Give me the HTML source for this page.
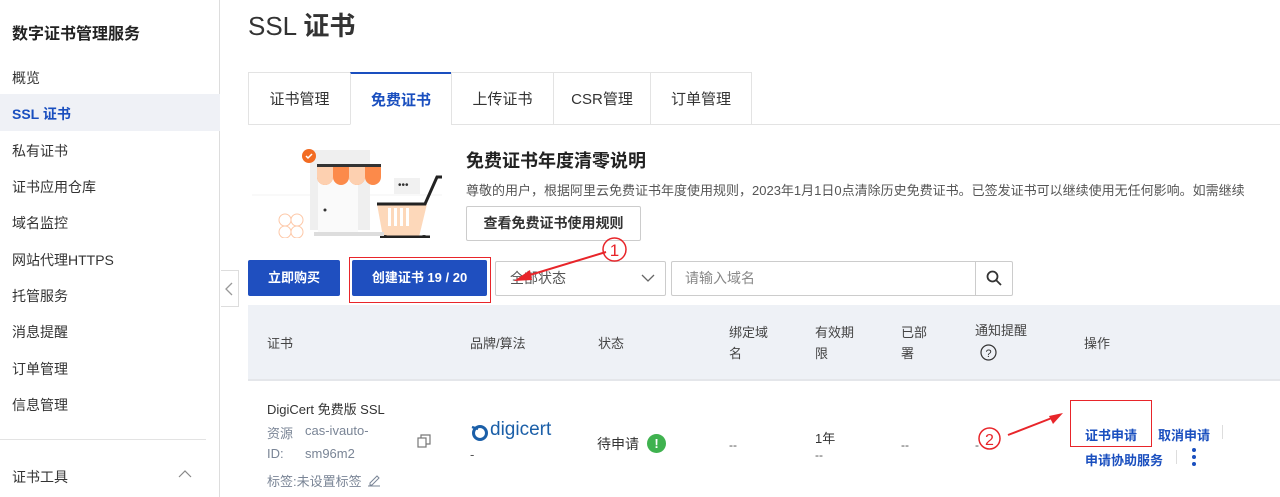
<!DOCTYPE html>
<html><head><meta charset="utf-8"><style>
*{margin:0;padding:0;box-sizing:border-box}
body{width:1280px;height:497px;overflow:hidden;background:#fff;font-family:"Liberation Sans","Noto Sans CJK SC",sans-serif;color:#333;position:relative}
.a{position:absolute;white-space:nowrap}
.nav{left:12px;font-size:14px;color:#333}
.blue{color:#1a4fbf}
.th{font-size:13px;color:#444;line-height:21px}
.btn{position:absolute;background:#1f4fbf;color:#fff;font-size:13px;font-weight:bold;text-align:center;line-height:36px;border-radius:2px}
.tab{position:absolute;top:72px;height:53px;border:1px solid #e3e3e3;font-size:15px;color:#333;text-align:center;line-height:53px;background:#fff}
</style></head><body>
<div class="a" style="left:0;top:0;width:220px;height:497px;border-right:1px solid #ddd"></div>
<div class="a" style="left:12px;top:20px;font-size:16px;font-weight:bold;color:#222">数字证书管理服务</div>
<div class="a" style="left:0;top:94px;width:220px;height:37px;background:#eff1f6"></div>
<div class="a nav" style="top:68px">概览</div>
<div class="a nav blue" style="top:104px;font-weight:bold">SSL 证书</div>
<div class="a nav" style="top:141px">私有证书</div>
<div class="a nav" style="top:177px">证书应用仓库</div>
<div class="a nav" style="top:213px">域名监控</div>
<div class="a nav" style="top:250px">网站代理HTTPS</div>
<div class="a nav" style="top:286px">托管服务</div>
<div class="a nav" style="top:322px">消息提醒</div>
<div class="a nav" style="top:359px">订单管理</div>
<div class="a nav" style="top:395px">信息管理</div>
<div class="a" style="left:0;top:439px;width:206px;height:1px;background:#e3e3e3"></div>
<div class="a nav" style="top:467px">证书工具</div>
<svg class="a" style="left:178px;top:470px" width="14" height="8"><path d="M1 7L7 1L13 7" stroke="#888" fill="none" stroke-width="1.2"/></svg>
<div class="a" style="left:221px;top:270px;width:18px;height:37px;border:1px solid #ddd;border-left:none;background:#fff"></div>
<svg class="a" style="left:225px;top:282px" width="8" height="14"><path d="M7 1L1 7L7 13" stroke="#999" fill="none" stroke-width="1.3"/></svg>
<div class="a" style="left:248px;top:6px;font-size:26px;color:#333"><span>SSL</span> <b>证书</b></div>
<div class="a" style="left:248px;top:124px;width:1032px;height:1px;background:#e3e3e3"></div>
<div class="tab" style="left:248px;width:103px">证书管理</div>
<div class="tab" style="left:350px;width:102px;border-top:2px solid #1a4fbf;border-bottom-color:#fff;color:#1a4fbf;font-weight:bold">免费证书</div>
<div class="tab" style="left:451px;width:103px">上传证书</div>
<div class="tab" style="left:553px;width:98px">CSR管理</div>
<div class="tab" style="left:650px;width:102px">订单管理</div>
<svg class="a" style="left:252px;top:140px" width="190" height="98">
<line x1="0" y1="55" x2="190" y2="55" stroke="#f3f3f3"/>
<rect x="58" y="10" width="60" height="80" fill="#efefef"/>
<rect x="66" y="40" width="40" height="52" fill="#fafafa"/>
<circle cx="73" cy="70" r="1.5" fill="#333"/>
<rect x="65" y="24" width="64" height="3" fill="#333"/>
<path d="M65 27h16v10a8 8 0 0 1-16 0zM81 27h16v10a8 8 0 0 1-16 0zM97 27h16v10a8 8 0 0 1-16 0zM113 27h16v10a8 8 0 0 1-16 0z" fill="#fc8a4a"/>
<path d="M65 27h16v10a8 8 0 0 1-16 0zM97 27h16v10a8 8 0 0 1-16 0z" fill="#fdd0b0"/>
<circle cx="57" cy="16" r="7" fill="#f26b22"/><path d="M54 16l2 2 4-4" stroke="#fff" fill="none" stroke-width="1.5"/>
<rect x="142" y="38" width="26" height="16" fill="#f1f1f1"/><text x="146" y="48" font-size="10" fill="#333">•••</text>
<path d="M125 64h50l-8 33h-36z" fill="#fdd8ba"/>
<path d="M125 64h48l12-27h8" stroke="#222" stroke-width="3" fill="none"/>
<rect x="136" y="68" width="3" height="18" fill="#fff"/><rect x="142" y="68" width="3" height="18" fill="#fff"/><rect x="148" y="68" width="3" height="18" fill="#fff"/><rect x="154" y="68" width="3" height="18" fill="#fff"/>
<line x1="128" y1="97" x2="178" y2="97" stroke="#222" stroke-width="3"/>
<circle cx="133" cy="99" r="4" fill="#222"/><circle cx="172" cy="99" r="4" fill="#222"/>
<rect x="62" y="92" width="70" height="4" fill="#ddd"/>
<g stroke="#fdc8a8" fill="none"><circle cx="33" cy="80" r="6"/><circle cx="45" cy="80" r="6"/><circle cx="33" cy="92" r="6"/><circle cx="45" cy="92" r="6"/></g>
</svg>
<div class="a" style="left:466px;top:147px;font-size:18px;font-weight:bold;color:#222">免费证书年度清零说明</div>
<div class="a" style="left:466px;top:180px;font-size:13px;color:#555">尊敬的用户，根据阿里云免费证书年度使用规则，2023年1月1日0点清除历史免费证书。已签发证书可以继续使用无任何影响。如需继续</div>
<div class="a" style="left:466px;top:206px;width:175px;height:35px;border:1px solid #ccc;border-radius:2px;font-size:14px;font-weight:bold;color:#333;text-align:center;line-height:33px">查看免费证书使用规则</div>
<div class="btn" style="left:248px;top:260px;width:92px">立即购买</div>
<div class="btn" style="left:352px;top:260px;width:135px">创建证书 19 / 20</div>
<div class="a" style="left:349px;top:257px;width:142px;height:46px;border:1.5px solid #e8252a"></div>
<div class="a" style="left:495px;top:261px;width:171px;height:35px;border:1px solid #ccc;border-radius:2px;font-size:14px;color:#555;line-height:33px;padding-left:14px">全部状态</div>
<svg class="a" style="left:641px;top:274px" width="14" height="9"><path d="M1 1L7 7L13 1" stroke="#666" fill="none" stroke-width="1.3"/></svg>
<div class="a" style="left:671px;top:261px;width:342px;height:35px;border:1px solid #ccc;border-radius:2px;font-size:14px;color:#888;line-height:33px;padding-left:13px">请输入域名</div>
<div class="a" style="left:975px;top:261px;width:1px;height:35px;background:#ccc"></div>
<svg class="a" style="left:986px;top:270px" width="16" height="16"><circle cx="6.5" cy="6.5" r="5" stroke="#333" fill="none" stroke-width="1.8"/><path d="M10 10l5 5" stroke="#333" stroke-width="1.8"/></svg>
<svg class="a" style="left:601px;top:236px" width="27" height="27"><circle cx="13.5" cy="13.5" r="11.5" stroke="#e8252a" fill="none" stroke-width="1.5"/><text x="13.5" y="20" font-size="17" text-anchor="middle" fill="#e8252a" font-family="Liberation Sans">1</text></svg>
<svg class="a" style="left:510px;top:248px" width="100" height="40"><path d="M96 4L10 30" stroke="#e8252a" stroke-width="2"/><path d="M4 33L20 22L22 32z" fill="#e8252a"/></svg>
<div class="a" style="left:248px;top:305px;width:1032px;height:76px;background:#eef1f6;border-bottom:2px solid #e4e6ea"></div>
<div class="a th" style="left:267px;top:333px">证书</div>
<div class="a th" style="left:470px;top:333px">品牌/算法</div>
<div class="a th" style="left:598px;top:333px">状态</div>
<div class="a th" style="left:729px;top:322px">绑定域<br>名</div>
<div class="a th" style="left:815px;top:322px">有效期<br>限</div>
<div class="a th" style="left:901px;top:322px">已部<br>署</div>
<div class="a th" style="left:975px;top:320px">通知提醒</div>
<svg class="a" style="left:980px;top:344px" width="17" height="17"><circle cx="8.5" cy="8.5" r="7.5" stroke="#333" fill="none" stroke-width="1.2"/><text x="8.5" y="13" font-size="11" text-anchor="middle" fill="#333" font-family="Liberation Sans">?</text></svg>
<div class="a th" style="left:1084px;top:333px">操作</div>
<div class="a" style="left:267px;top:399px;font-size:13px;color:#333">DigiCert 免费版 SSL</div>
<div class="a" style="left:267px;top:423px;font-size:13px;color:#7a8596">资源</div>
<div class="a" style="left:305px;top:423px;font-size:13px;color:#7a8596">cas-ivauto-</div>
<div class="a" style="left:267px;top:446px;font-size:13px;color:#7a8596">ID:</div>
<div class="a" style="left:305px;top:446px;font-size:13px;color:#7a8596">sm96m2</div>
<div class="a" style="left:267px;top:471px;font-size:13px;color:#7a8596">标签:未设置标签</div>
<svg class="a" style="left:367px;top:473px" width="14" height="14"><path d="M3 10L10 3l2 2-7 7H3z" stroke="#7a8596" fill="none"/><path d="M1 13h12" stroke="#7a8596"/></svg>
<svg class="a" style="left:417px;top:434px" width="14" height="14"><rect x="1" y="4" width="8" height="9" stroke="#777" fill="none" stroke-width="1.2"/><path d="M4 4V1h9v9h-4" stroke="#777" fill="none" stroke-width="1.2"/></svg>
<svg class="a" style="left:470px;top:424px" width="20" height="18"><circle cx="10" cy="9" r="6.5" stroke="#1b5fa8" stroke-width="3" fill="none"/><path d="M2 3L8 5" stroke="#1b5fa8" stroke-width="2.5"/></svg>
<div class="a" style="left:490px;top:419px;font-size:19px;color:#1b5fa8">digicert</div>
<div class="a" style="left:470px;top:447px;font-size:13px;color:#555">-</div>
<div class="a" style="left:597px;top:434px;font-size:14px;color:#333">待申请</div>
<div class="a" style="left:647px;top:434px;width:19px;height:19px;border-radius:50%;background:#3fb24f;color:#fff;font-size:13px;font-weight:bold;text-align:center;line-height:19px">!</div>
<div class="a" style="left:729px;top:438px;font-size:12px;color:#555">--</div>
<div class="a" style="left:815px;top:428px;font-size:13px;color:#333">1年</div>
<div class="a" style="left:815px;top:448px;font-size:12px;color:#555">--</div>
<div class="a" style="left:901px;top:438px;font-size:12px;color:#555">--</div>
<div class="a" style="left:975px;top:438px;font-size:12px;color:#555">-</div>
<svg class="a" style="left:977px;top:426px" width="25" height="25"><circle cx="12.5" cy="12.5" r="10.5" stroke="#e8252a" fill="none" stroke-width="1.5"/><text x="12.5" y="19" font-size="16" text-anchor="middle" fill="#e8252a" font-family="Liberation Sans">2</text></svg>
<svg class="a" style="left:1005px;top:408px" width="60" height="30"><path d="M3 27L52 8" stroke="#e8252a" stroke-width="2"/><path d="M58 5L44 8L48 16z" fill="#e8252a"/></svg>
<div class="a" style="left:1070px;top:400px;width:82px;height:47px;border:1.5px solid #e8252a"></div>
<div class="a blue" style="left:1085px;top:425px;font-size:13px;font-weight:bold">证书申请</div>
<div class="a blue" style="left:1158px;top:425px;font-size:13px;font-weight:bold">取消申请</div>
<div class="a" style="left:1222px;top:425px;width:1px;height:14px;background:#ddd"></div>
<div class="a blue" style="left:1085px;top:450px;font-size:13px;font-weight:bold">申请协助服务</div>
<div class="a" style="left:1176px;top:450px;width:1px;height:14px;background:#ddd"></div>
<svg class="a" style="left:1191px;top:447px" width="6" height="20"><circle cx="3" cy="3" r="2" fill="#1a4fbf"/><circle cx="3" cy="10" r="2" fill="#1a4fbf"/><circle cx="3" cy="17" r="2" fill="#1a4fbf"/></svg>
</body></html>
